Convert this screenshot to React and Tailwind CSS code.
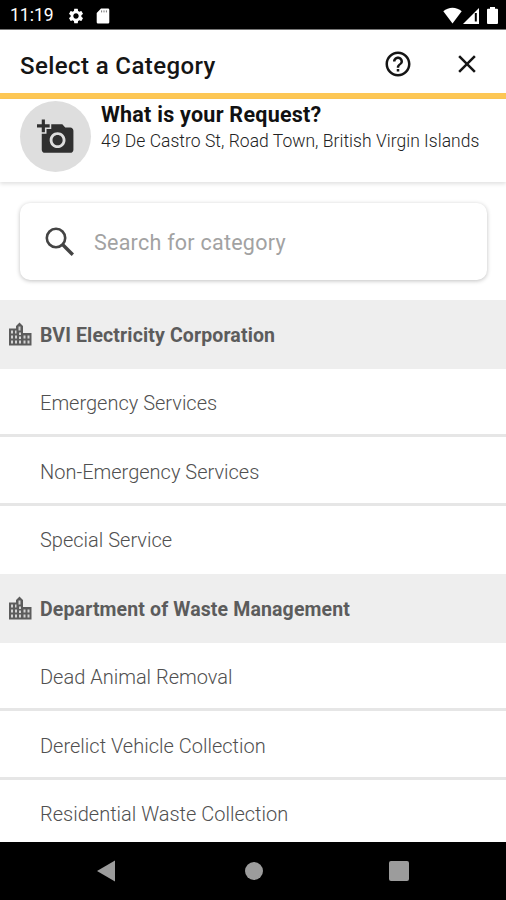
import { MdAddAPhoto, MdClose, MdHelpOutline, MdSettings } from "react-icons/md";

const sections = [
  {
    title: "BVI Electricity Corporation",
    items: [
      "Emergency Services",
      "Non-Emergency Services",
      "Special Service",
    ],
  },
  {
    title: "Department of Waste Management",
    items: [
      "Dead Animal Removal",
      "Derelict Vehicle Collection",
      "Residential Waste Collection",
    ],
  },
];

function StatusBar() {
  return (
    <div className="h-[30px] shrink-0 bg-black border-b border-[#777777] flex items-center pl-[10px] pr-[8px] pt-[2px] text-white">
      <span className="pt-[1px] text-[17.5px] leading-none w-[57px]">
        11:19
      </span>
      <MdSettings className="w-[18px] h-[18px]" />
      <svg viewBox="0 0 14 16" className="ml-[11px] w-[14px] h-[16px]">
        <path
          d="M5 0.5H12a1.3 1.3 0 0 1 1.3 1.3v12.4a1.3 1.3 0 0 1-1.3 1.3H2a1.3 1.3 0 0 1-1.3-1.3V5z"
          fill="#fff"
        />
        <path d="M5.6 2.4v2M8 2.4v2M10.4 2.4v2" stroke="#777" />
      </svg>
      <div className="ml-auto flex items-center">
        <svg viewBox="0 0 19 17" className="w-[19px] h-[17px]">
          <path d="M9.5 16.5L0.3 4.2C5.5-.5 13.5-.5 18.7 4.2z" fill="#fff" />
        </svg>
        <svg viewBox="0 0 16 16" className="ml-[1px] w-[16px] h-[16px]">
          <path d="M0 16L16 0V16z" fill="#fff" />
          <path d="M12.8 5V13.5" stroke="#000" strokeWidth="2" />
        </svg>
        <svg viewBox="0 0 11 17" className="ml-[8px] w-[11px] h-[17px]">
          <path
            d="M3 0h5v1.8h2a1 1 0 0 1 1 1V16a1 1 0 0 1-1 1H1a1 1 0 0 1-1-1V2.8a1 1 0 0 1 1-1h2z"
            fill="#fff"
          />
        </svg>
      </div>
    </div>
  );
}

function Header() {
  return (
    <div className="h-[69px] shrink-0 flex items-center pl-5 pr-[24px] border-b-[6px] border-[#fdc755] text-[#151515]">
      <h1 className="pt-[8px] text-[24px] leading-none font-medium tracking-[0.4px]">
        Select a Category
      </h1>
      <MdHelpOutline className="ml-auto mt-[5px] w-[30px] h-[30px]" />
      <MdClose className="ml-[39px] mt-[5px] w-[30px] h-[30px]" />
    </div>
  );
}

function RequestInfo() {
  return (
    <div className="h-[83px] shrink-0 flex pl-5 pt-[2px] shadow-[0_2px_4px_rgba(0,0,0,0.12)]">
      <div className="w-[71px] h-[71px] rounded-full bg-[#dedede] flex items-center justify-center shrink-0">
        <MdAddAPhoto className="w-[38px] h-[38px] text-[#303030]" />
      </div>
      <div className="pl-[10px]">
        <h2 className="text-[21.5px] leading-[28px] font-bold tracking-[0.25px] text-[#111111] whitespace-nowrap">
          What is your Request?
        </h2>
        <p className="text-[17.5px] leading-[25px] font-light tracking-[0.03px] text-[#222222] whitespace-nowrap">
          49 De Castro St, Road Town, British Virgin Islands
        </p>
      </div>
    </div>
  );
}

function SearchBox() {
  return (
    <div className="ml-5 mr-[19px] mt-[21px] mb-5 h-[77px] shrink-0 rounded-[10px] bg-white flex items-center pl-[25px] shadow-[0_1px_4px_rgba(0,0,0,0.25)]">
      <svg
        viewBox="0 0 30 30"
        className="w-[30px] h-[30px] text-[#444444]"
        fill="none"
        stroke="currentColor"
      >
        <circle cx="11" cy="11" r="9.2" strokeWidth="2.6" />
        <path d="M17.8 17.8L27.800 27.800" strokeWidth="3.4" />
      </svg>
      <span className="pl-[19px] pt-[3px] text-[21.5px] tracking-[0.25px] text-[#a2a2a2]">
        Search for category
      </span>
    </div>
  );
}

function CityIcon() {
  return (
    <svg viewBox="0 0 24 24" className="w-[24px] h-[24px]">
      <path d="M1 6.5H8V4L11.5 0.5L15 4V11H23.5V23.500H1z" fill="currentColor" />
      <path
        d="M3 8.500h2v3h-2zM3 13.500h2v3h-2zM3 18.500h2v3h-2zM7 8.500h1.500v3h-1.500zM7 13.500h2v3h-2zM7 18.500h2v3h-2zM10.500 4.500h2v4h-2zM11 10.500h2v2.500h-2zM11 14.500h2v2.500h-2zM11 18.500h2v3h-2zM15.500 13.500h2v3h-2zM15.500 18.500h2v3h-2zM19.500 13.500h2v3h-2zM19.500 18.500h2v3h-2z"
        fill="#d2d2d2"
      />
    </svg>
  );
}

function Section({ title, items }) {
  return (
    <div>
      <div className="h-[68.5px] bg-[#eeeeee] flex items-center pl-[8px] text-[#5c5c5c]">
        <CityIcon />
        <h3 className="pl-[8px] pt-[2px] text-[19.5px] font-bold tracking-[0.13px]">
          {title}
        </h3>
      </div>
      {items.map((item) => (
        <div
          key={item}
          className="h-[68.5px] border-b-[3px] border-[#e6e6e6] flex items-center pl-10 pt-[4px] text-[20px] font-light text-[#505050] last:border-b-0 last:pb-[3px]"
        >
          {item}
        </div>
      ))}
    </div>
  );
}

function NavBar() {
  return (
    <div className="h-[58px] shrink-0 bg-black flex items-center text-[#9c9c9c]">
      <svg viewBox="0 0 18 22" className="ml-[97px] w-[18px] h-[22px]">
        <path d="M0 11L18 0.5V21.5z" fill="currentColor" />
      </svg>
      <div className="ml-[130px] w-[18px] h-[18px] rounded-full bg-[#9c9c9c]" />
      <div className="ml-[126px] w-[20px] h-[20px] rounded-[2px] bg-[#9c9c9c]" />
    </div>
  );
}

export default function App() {
  return (
    <div className="w-[506px] h-[900px] overflow-hidden bg-white flex flex-col font-['Roboto',sans-serif]">
      <StatusBar />
      <Header />
      <RequestInfo />
      <SearchBox />
      <div className="flex-1 min-h-0 overflow-hidden">
        {sections.map((section) => (
          <Section
            key={section.title}
            title={section.title}
            items={section.items}
          />
        ))}
      </div>
      <NavBar />
    </div>
  );
}
